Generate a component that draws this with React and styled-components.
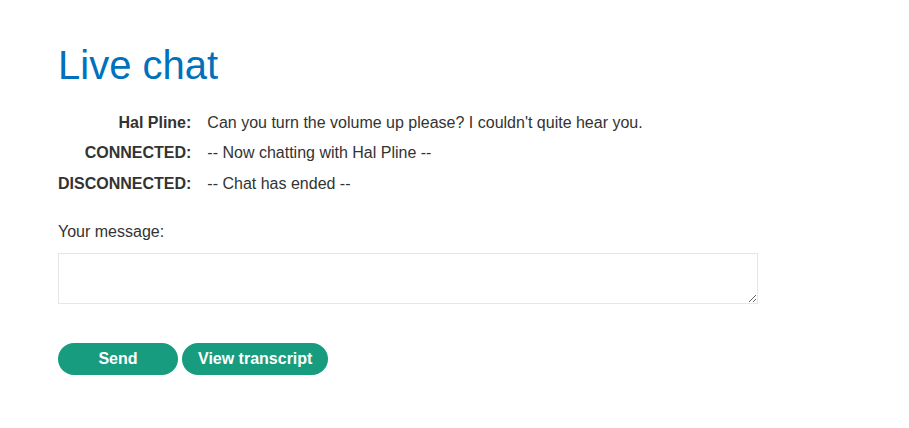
import { Fragment } from "react";
import styled, { createGlobalStyle } from "styled-components";

const GlobalStyle = createGlobalStyle`
  html, body {
    margin: 0;
    padding: 0;
    background: #ffffff;
  }
  body {
    font-family: "Liberation Sans", Arial, sans-serif;
    color: #333332;
    font-size: 16px;
  }
`;

const Page = styled.div`
  padding: 42px 58px;
  display: flex;
  flex-direction: column;
`;

const Title = styled.h1`
  margin: 0 0 19px 0;
  font-size: 40px;
  font-weight: 400;
  line-height: 47px;
  color: #0071bc;
`;

const ChatLog = styled.div`
  display: grid;
  grid-template-columns: auto 1fr;
  column-gap: 16px;
  margin-bottom: 24px;
`;

const Label = styled.div`
  font-weight: 700;
  text-align: right;
  line-height: 30px;
  padding-top: ${(p) => (p.$last ? "1px" : "0")};
`;

const Message = styled.div`
  line-height: 30px;
  padding-top: ${(p) => (p.$last ? "1px" : "0")};
`;

const FieldLabel = styled.label`
  display: block;
  line-height: 18px;
  margin-bottom: 12px;
`;

const MessageBox = styled.textarea`
  box-sizing: border-box;
  width: 700px;
  height: 51px;
  border: 1px solid #e6e6e6;
  border-radius: 0;
  padding: 6px;
  font-family: inherit;
  font-size: 16px;
  margin: 0 0 39px 0;
  outline: none;
`;

const Buttons = styled.div`
  display: flex;
  gap: 4px;
`;

const Button = styled.button`
  box-sizing: border-box;
  height: 32px;
  min-width: ${(p) => (p.$wide ? "120px" : "0")};
  padding: 0 16px;
  border: none;
  border-radius: 25px;
  background-color: #189c80;
  color: #ffffff;
  font-family: "Liberation Sans", Arial, sans-serif;
  font-size: 16px;
  font-weight: 700;
  cursor: pointer;
`;

const messages = [
  { who: "Hal Pline:", text: "Can you turn the volume up please? I couldn't quite hear you." },
  { who: "CONNECTED:", text: "-- Now chatting with Hal Pline --" },
  { who: "DISCONNECTED:", text: "-- Chat has ended --" },
];

const App = () => {
  return (
    <>
      <GlobalStyle />
      <Page>
        <Title>Live chat</Title>
        <ChatLog>
          {messages.map((m, i) => (
            <Fragment key={i}>
              <Label $last={i === messages.length - 1}>{m.who}</Label>
              <Message $last={i === messages.length - 1}>{m.text}</Message>
            </Fragment>
          ))}
        </ChatLog>
        <FieldLabel htmlFor="message">Your message:</FieldLabel>
        <MessageBox id="message" />
        <Buttons>
          <Button $wide>Send</Button>
          <Button>View transcript</Button>
        </Buttons>
      </Page>
    </>
  );
};

export default App;
